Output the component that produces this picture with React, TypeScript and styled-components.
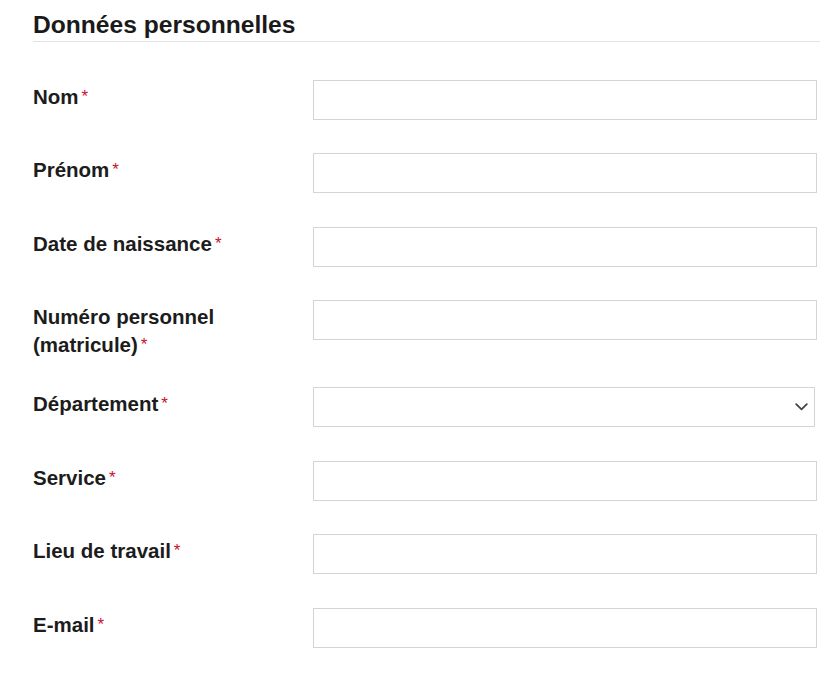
import React from "react";
import styled, { createGlobalStyle } from "styled-components";

const Global = createGlobalStyle`
  html, body { margin: 0; padding: 0; background: #ffffff; }
  body { font-family: "Liberation Sans", Arial, sans-serif; color: #1c1c1c; }
`;

const Page = styled.div`
  padding: 10px 17px 0 33px;
  width: 787px;
`;

const Heading = styled.h2`
  margin: 0;
  font-size: 24.6px;
  font-weight: 700;
  line-height: 30px;
  color: #1a1a1a;
  padding-bottom: 1px;
  border-bottom: 1px solid #e2e2e2;
`;

const Form = styled.form`
  display: flex;
  flex-direction: column;
  gap: 33.5px;
  margin-top: 37.6px;
`;

const Row = styled.div`
  display: grid;
  grid-template-columns: 280px 504px;
  align-items: start;
  min-height: 40px;
`;

const Label = styled.label`
  display: block;
  padding-top: 3px;
  margin-bottom: -7.5px;
  font-size: 20.5px;
  font-weight: 700;
  line-height: 28px;
  color: #1c1c1c;
  max-width: 200px;
`;

const Req = styled.span`
  color: #c8102e;
  font-weight: 400;
  font-size: 17px;
  margin-left: 3px;
  position: relative;
  top: -2px;
`;

const Input = styled.input`
  box-sizing: border-box;
  width: 504px;
  height: 40px;
  margin: 0;
  border: 1px solid #d4d4d4;
  border-radius: 0;
  background: #fff;
  font-family: inherit;
  font-size: 16px;
  padding: 0 10px;
  outline: none;
`;

const SelectWrap = styled.div`
  position: relative;
  width: 502px;
  height: 40px;
`;

const Select = styled.select`
  box-sizing: border-box;
  appearance: none;
  -webkit-appearance: none;
  width: 100%;
  height: 40px;
  margin: 0;
  border: 1px solid #d4d4d4;
  border-radius: 0;
  background: #fff;
  font-family: inherit;
  font-size: 16px;
  padding: 0 30px 0 10px;
  outline: none;
`;

const Chevron = styled.svg`
  position: absolute;
  right: 7px;
  top: 16px;
  pointer-events: none;
`;

type Field = { label: string; kind?: "select"; type?: string };

const fields: Field[] = [
  { label: "Nom" },
  { label: "Prénom" },
  { label: "Date de naissance" },
  { label: "Numéro personnel (matricule)" },
  { label: "Département", kind: "select" },
  { label: "Service" },
  { label: "Lieu de travail" },
  { label: "E-mail", type: "email" },
];

export default function App() {
  return (
    <>
      <Global />
      <Page>
        <Heading>Données personnelles</Heading>
        <Form onSubmit={(e) => e.preventDefault()}>
          {fields.map((f, i) => (
            <Row key={i}>
              <Label htmlFor={`f${i}`}>
                {f.label}
                <Req>*</Req>
              </Label>
              {f.kind === "select" ? (
                <SelectWrap>
                  <Select id={`f${i}`} defaultValue="">
                    <option value=""></option>
                  </Select>
                  <Chevron width="13" height="8" viewBox="0 0 13 8">
                    <path
                      d="M1.2 1.2 L6.5 6.3 L11.8 1.2"
                      fill="none"
                      stroke="#444"
                      strokeWidth="1.8"
                      strokeLinecap="round"
                      strokeLinejoin="round"
                    />
                  </Chevron>
                </SelectWrap>
              ) : (
                <Input id={`f${i}`} type={f.type ?? "text"} />
              )}
            </Row>
          ))}
        </Form>
      </Page>
    </>
  );
}
